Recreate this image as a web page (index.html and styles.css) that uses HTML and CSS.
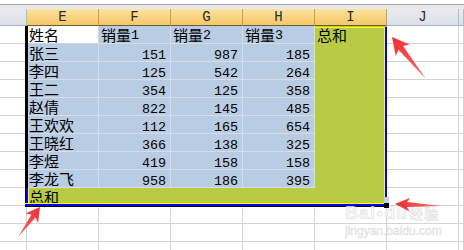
FILE: index.html
```html
<!DOCTYPE html>
<html>
<head>
<meta charset="utf-8">
<link rel="stylesheet" href="styles.css">
</head>
<body>
<div class="app">
  <div class="topbar"></div>
  <div class="sheet">
    <div class="hd"></div>
    <div class="hd sel">E</div>
    <div class="hd sel">F</div>
    <div class="hd sel">G</div>
    <div class="hd sel">H</div>
    <div class="hd sel">I</div>
    <div class="hd">J</div>
    <div class="hd"></div>

    <div class="c"></div>
    <div class="c t">姓名</div>
    <div class="c t blue">销量<span class="d up">1</span></div>
    <div class="c t blue">销量<span class="d up">2</span></div>
    <div class="c t blue">销量<span class="d up">3</span></div>
    <div class="c t green">总和</div>
    <div class="c"></div>
    <div class="c"></div>

    <div class="c"></div>
    <div class="c t blue">张三</div>
    <div class="c n blue"><span class="d">151</span></div>
    <div class="c n blue"><span class="d">987</span></div>
    <div class="c n blue"><span class="d">185</span></div>
    <div class="c green"></div>
    <div class="c"></div>
    <div class="c"></div>

    <div class="c"></div>
    <div class="c t blue">李四</div>
    <div class="c n blue"><span class="d">125</span></div>
    <div class="c n blue"><span class="d">542</span></div>
    <div class="c n blue"><span class="d">264</span></div>
    <div class="c green"></div>
    <div class="c"></div>
    <div class="c"></div>

    <div class="c"></div>
    <div class="c t blue">王二</div>
    <div class="c n blue"><span class="d">354</span></div>
    <div class="c n blue"><span class="d">125</span></div>
    <div class="c n blue"><span class="d">358</span></div>
    <div class="c green"></div>
    <div class="c"></div>
    <div class="c"></div>

    <div class="c"></div>
    <div class="c t blue">赵倩</div>
    <div class="c n blue"><span class="d">822</span></div>
    <div class="c n blue"><span class="d">145</span></div>
    <div class="c n blue"><span class="d">485</span></div>
    <div class="c green"></div>
    <div class="c"></div>
    <div class="c"></div>

    <div class="c"></div>
    <div class="c t blue">王欢欢</div>
    <div class="c n blue"><span class="d">112</span></div>
    <div class="c n blue"><span class="d">165</span></div>
    <div class="c n blue"><span class="d">654</span></div>
    <div class="c green"></div>
    <div class="c"></div>
    <div class="c"></div>

    <div class="c"></div>
    <div class="c t blue">王晓红</div>
    <div class="c n blue"><span class="d">366</span></div>
    <div class="c n blue"><span class="d">138</span></div>
    <div class="c n blue"><span class="d">325</span></div>
    <div class="c green"></div>
    <div class="c"></div>
    <div class="c"></div>

    <div class="c"></div>
    <div class="c t blue">李煜</div>
    <div class="c n blue"><span class="d">419</span></div>
    <div class="c n blue"><span class="d">158</span></div>
    <div class="c n blue"><span class="d">158</span></div>
    <div class="c green"></div>
    <div class="c"></div>
    <div class="c"></div>

    <div class="c"></div>
    <div class="c t blue">李龙飞</div>
    <div class="c n blue"><span class="d">958</span></div>
    <div class="c n blue"><span class="d">186</span></div>
    <div class="c n blue"><span class="d">395</span></div>
    <div class="c green"></div>
    <div class="c"></div>
    <div class="c"></div>

    <div class="c"></div>
    <div class="c t green">总和</div>
    <div class="c green"></div>
    <div class="c green"></div>
    <div class="c green"></div>
    <div class="c green"></div>
    <div class="c"></div>
    <div class="c"></div>

    <div class="c"></div><div class="c"></div><div class="c"></div><div class="c"></div>
    <div class="c"></div><div class="c"></div><div class="c"></div><div class="c"></div>

    <div class="c"></div><div class="c"></div><div class="c"></div><div class="c"></div>
    <div class="c"></div><div class="c"></div><div class="c"></div><div class="c"></div>

    <div class="c"></div><div class="c"></div><div class="c"></div><div class="c"></div>
    <div class="c"></div><div class="c"></div><div class="c"></div><div class="c"></div>
  </div>

  <div class="ov sel-left"></div>
  <div class="ov tot-left"></div>
  <div class="ov sel-bottom"></div>
  <div class="ov sel-right"></div>
  <div class="ov sel-top"></div>
  <div class="ov handle-hi"></div>
  <div class="ov handle"></div>

  <div class="watermark">
    <div class="wm-logo">Bai<span class="paw">●</span>du<span class="wm-cn">经验</span></div>
    <div class="wm-url">jingyan.baidu.com</div>
  </div>

  <svg class="arrows" width="464" height="250" viewBox="0 0 464 250">
    <defs>
      <linearGradient id="g1" x1="392" y1="37" x2="426" y2="79" gradientUnits="userSpaceOnUse">
        <stop offset="0" stop-color="#f22f2f"/>
        <stop offset="1" stop-color="#f86a6a"/>
      </linearGradient>
      <linearGradient id="g2" x1="40" y1="207" x2="18" y2="237" gradientUnits="userSpaceOnUse">
        <stop offset="0" stop-color="#f22f2f"/>
        <stop offset="1" stop-color="#f86a6a"/>
      </linearGradient>
      <linearGradient id="g3" x1="395" y1="204" x2="441" y2="206" gradientUnits="userSpaceOnUse">
        <stop offset="0" stop-color="#f22f2f"/>
        <stop offset="1" stop-color="#f87070"/>
      </linearGradient>
    </defs>
    <polygon fill="url(#g1)" points="392,37 409.7,44.6 403.1,46 426,79 398.5,49.8 395.7,56"/>
    <polygon fill="url(#g2)" points="40,207 38.1,223 35.5,217.4 18,237 31.5,214.4 25.3,213.6"/>
    <polygon fill="url(#g3)" points="395,204 410.3,197.7 407.1,202 441,206 406.9,207 409.7,211.6"/>
  </svg>
</div>
</body>
</html>
```

FILE: styles.css
```css
* { box-sizing: border-box; }

html, body {
  margin: 0;
  padding: 0;
  background: #fff;
}

.app {
  position: relative;
  width: 464px;
  height: 250px;
  overflow: hidden;
  font-family: "Noto Sans CJK SC", sans-serif;
  color: #000;
}

.topbar {
  height: 9px;
  background: linear-gradient(#fff 0, #fff 4px, #a3a3a3 4px, #a3a3a3 5px, #e9e9e9 5px, #e9e9e9 9px);
}

.sheet {
  display: grid;
  grid-template-columns: 27px repeat(6, 72px) 5px;
  grid-template-rows: 17px;
  grid-auto-rows: 18px;
}

.hd {
  border-right: 1px solid #b1bbc6;
  border-bottom: 1px solid #9eb6ce;
  background: linear-gradient(#e8ebef, #dde1e6);
  font-family: "Liberation Mono", monospace;
  font-size: 14px;
  line-height: 16px;
  text-align: center;
  color: #2a2a2a;
}

.hd.sel {
  background: linear-gradient(#fbe3a0, #f5c767);
  border-right-color: #c99b58;
  border-bottom-color: #6b5a3a;
}

.c {
  border-right: 1px solid #d4d4d4;
  border-bottom: 1px solid #d4d4d4;
  font-size: 15px;
  line-height: 18px;
  white-space: nowrap;
}

.t {
  padding-left: 2px;
}

.n {
  text-align: right;
  padding-right: 4px;
}

.d {
  font-family: "Liberation Mono", monospace;
  font-size: 13.4px;
}

.d.up {
  vertical-align: 2px;
}

.blue {
  background: #b8cce4;
  border-color: #d9dde3;
}

.green {
  background: #b9cb45;
  border-color: #b9cb45;
}

.ov {
  position: absolute;
}

.sel-left {
  left: 25px;
  top: 26px;
  width: 3px;
  height: 162px;
  background: #000;
}

.tot-left {
  left: 25px;
  top: 188px;
  width: 4px;
  height: 19px;
  background: linear-gradient(90deg, #000 0, #000 1px, #0000ff 1px, #0000ff 3px, #ffff00 3px);
}

.sel-bottom {
  left: 25px;
  top: 203px;
  width: 362px;
  height: 4px;
  background: linear-gradient(#ffff00 0, #ffff00 1px, #0000ff 1px, #0000ff 3px, #000 3px);
}

.sel-right {
  left: 384px;
  top: 27px;
  width: 3px;
  height: 180px;
  background: linear-gradient(90deg, #ffff00 0, #ffff00 1px, #0000ff 1px);
}

.sel-top {
  left: 315px;
  top: 27px;
  width: 70px;
  height: 1px;
  background: #ffff00;
}

.handle-hi {
  left: 384px;
  top: 197px;
  width: 5px;
  height: 6px;
  background: #c9cbe9;
}

.handle {
  left: 384px;
  top: 203px;
  width: 5px;
  height: 5px;
  background: #000;
}

.watermark {
  position: absolute;
  left: 345px;
  top: 202px;
  color: rgba(244, 244, 244, 0.8);
  -webkit-text-stroke: 0.6px rgba(175, 175, 175, 0.35);
  font-family: "Liberation Sans", sans-serif;
  font-weight: bold;
  pointer-events: none;
}

.wm-logo {
  font-size: 18px;
  line-height: 22px;
  letter-spacing: 1px;
}

.paw {
  font-size: 12px;
  vertical-align: 2px;
}

.wm-cn {
  font-family: "Noto Sans CJK SC", sans-serif;
  font-size: 14px;
  margin-left: 1px;
}

.wm-url {
  font-size: 12px;
  line-height: 14px;
  font-weight: normal;
}

.arrows {
  position: absolute;
  left: 0;
  top: 0;
  pointer-events: none;
}
```
